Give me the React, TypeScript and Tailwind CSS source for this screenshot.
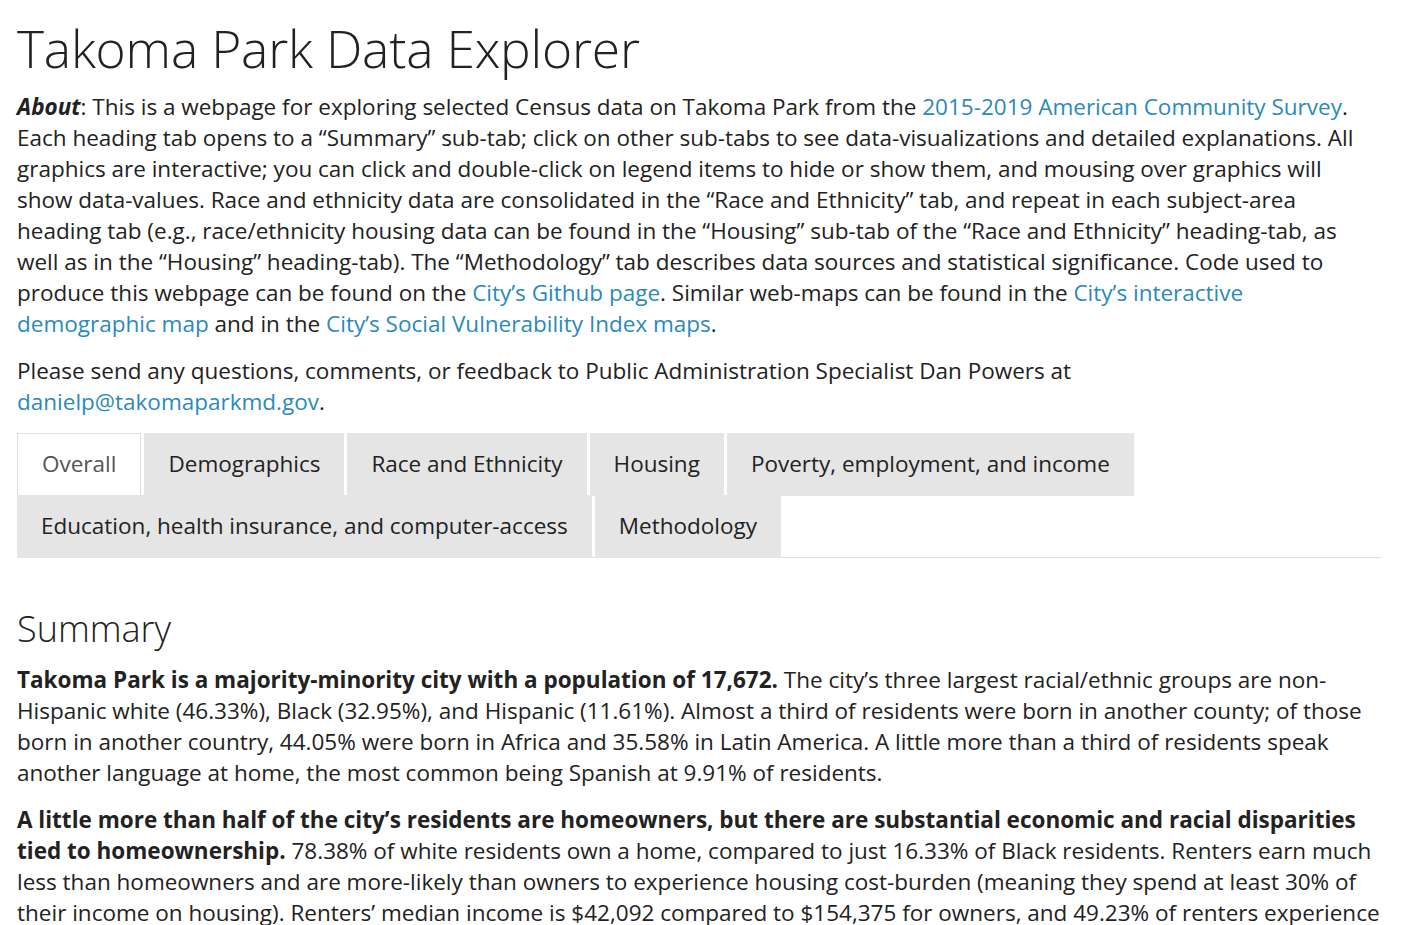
import React from 'react';

const tabs = [
  'Overall',
  'Demographics',
  'Race and Ethnicity',
  'Housing',
  'Poverty, employment, and income',
  'Education, health insurance, and computer-access',
  'Methodology',
];

const A: React.FC<{ children: React.ReactNode }> = ({ children }) => (
  <a href="#" className="text-[#2a8abb] no-underline">
    {children}
  </a>
);

export default function App() {
  return (
    <div
      className="min-h-screen bg-white text-[#222]"
      style={{ fontFamily: '"Open Sans", "Liberation Sans", sans-serif' }}
    >
      <div className="w-[1364px] ml-[17px]">
        <h1 className="text-[51.5px] font-light leading-[1.1] pt-[20px] mb-[14px] tracking-[-0.2px]">
          Takoma Park Data Explorer
        </h1>

        <p className="text-[22.5px] leading-[31px] mb-[16px]">
          <b className="italic font-bold">About</b>: This is a webpage for exploring selected Census data on Takoma Park
          from the <A>2015-2019 American Community Survey</A>. Each heading tab opens to a “Summary” sub-tab; click
          on other sub-tabs to see data-visualizations and detailed explanations. All graphics are interactive; you can
          click and double-click on legend items to hide or show them, and mousing over graphics will show
          data-values. Race and ethnicity data are consolidated in the “Race and Ethnicity” tab, and repeat in each
          subject-area heading tab (e.g., race/ethnicity housing data can be found in the “Housing” sub-tab of the
          “Race and Ethnicity” heading-tab, as well as in the “Housing” heading-tab). The “Methodology” tab describes
          data sources and statistical significance. Code used to produce this webpage can be found on the{' '}
          <A>City’s Github page</A>. Similar web-maps can be found in the <A>City’s interactive demographic map</A> and
          in the <A>City’s Social Vulnerability Index maps</A>.
        </p>

        <p className="text-[22.5px] leading-[31px] mb-[16px]">
          Please send any questions, comments, or feedback to Public Administration Specialist Dan Powers at{' '}
          <A>danielp@takomaparkmd.gov</A>.
        </p>

        <ul className="flex flex-wrap gap-x-[3px] border-b border-[#ddd]">
          {tabs.map((t, i) => (
            <li
              key={t}
              className={
                'h-[63px] -mb-px flex items-center px-[24px] text-[22.5px] ' +
                (i === 0
                  ? 'bg-white border border-[#ddd] border-b-white text-[#555]'
                  : 'bg-[#e5e5e5] text-[#222]')
              }
            >
              {t}
            </li>
          ))}
        </ul>

        <h3 className="text-[36px] font-light leading-[1.1] mt-[51px] mb-[16px]">Summary</h3>

        <p className="text-[22.5px] leading-[31px] mb-[16px]">
          <b className="font-bold">Takoma Park is a majority-minority city with a population of 17,672.</b> The city’s
          three largest racial/ethnic groups are non-Hispanic white (46.33%), Black (32.95%), and Hispanic (11.61%).
          Almost a third of residents were born in another county; of those born in another country, 44.05% were born
          in Africa and 35.58% in Latin America. A little more than a third of residents speak another language at
          home, the most common being Spanish at 9.91% of residents.
        </p>

        <p className="text-[22.5px] leading-[31px] mb-[16px]">
          <b className="font-bold">
            A little more than half of the city’s residents are homeowners, but there are substantial economic and
            racial disparities tied to homeownership.
          </b>{' '}
          78.38% of white residents own a home, compared to just 16.33% of Black residents. Renters earn much less
          than homeowners and are more-likely than owners to experience housing cost-burden (meaning they spend at
          least 30% of their income on housing). Renters’ median income is $42,092 compared to $154,375 for owners, and
          49.23% of renters experience cost-burden compared to 17.95% of owners.
        </p>
      </div>
    </div>
  );
}
